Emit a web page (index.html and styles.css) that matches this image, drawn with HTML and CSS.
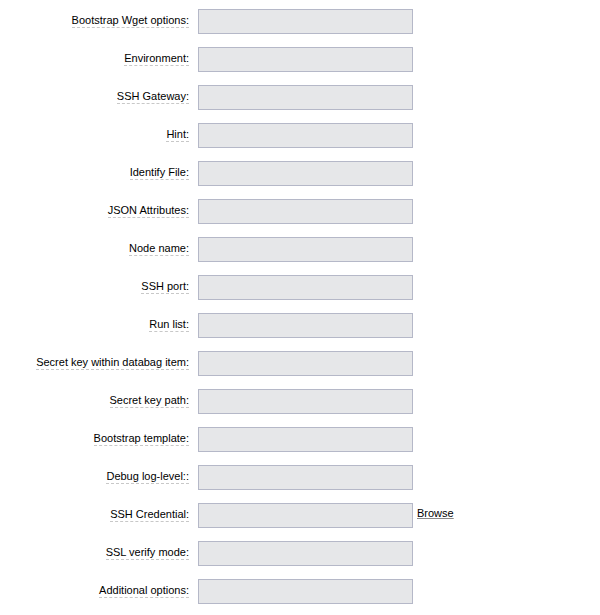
FILE: index.html
```html
<!DOCTYPE html>
<html>
<head>
<meta charset="utf-8">
<link rel="stylesheet" href="styles.css">
</head>
<body>
<div class="form">
  <div class="row"><div class="label"><span>Bootstrap Wget options:</span></div><div class="field"></div></div>
  <div class="row"><div class="label"><span>Environment:</span></div><div class="field"></div></div>
  <div class="row"><div class="label"><span>SSH Gateway:</span></div><div class="field"></div></div>
  <div class="row"><div class="label"><span>Hint:</span></div><div class="field"></div></div>
  <div class="row"><div class="label"><span>Identify File:</span></div><div class="field"></div></div>
  <div class="row"><div class="label"><span>JSON Attributes:</span></div><div class="field"></div></div>
  <div class="row"><div class="label"><span>Node name:</span></div><div class="field"></div></div>
  <div class="row"><div class="label"><span>SSH port:</span></div><div class="field"></div></div>
  <div class="row"><div class="label"><span>Run list:</span></div><div class="field"></div></div>
  <div class="row"><div class="label"><span>Secret key within databag item:</span></div><div class="field"></div></div>
  <div class="row"><div class="label"><span>Secret key path:</span></div><div class="field"></div></div>
  <div class="row"><div class="label"><span>Bootstrap template:</span></div><div class="field"></div></div>
  <div class="row"><div class="label"><span>Debug log-level::</span></div><div class="field"></div></div>
  <div class="row"><div class="label"><span>SSH Credential:</span></div><div class="field"></div><a class="browse" href="#">Browse</a></div>
  <div class="row"><div class="label"><span>SSL verify mode:</span></div><div class="field"></div></div>
  <div class="row"><div class="label"><span>Additional options:</span></div><div class="field"></div></div>
</div>
</body>
</html>
```
FILE: styles.css
```css
html, body {
  margin: 0;
  padding: 0;
  background: #ffffff;
}
.form {
  display: flex;
  flex-direction: column;
  gap: 13px;
  padding-top: 9px;
  font-family: "Liberation Sans", Arial, sans-serif;
  font-size: 11px;
  color: #000;
}
.row {
  display: flex;
  align-items: center;
  height: 25px;
}
.label {
  width: 189px;
  text-align: right;
  margin-right: 9px;
  margin-bottom: 1px;
}
.label span {
  display: inline-block;
  line-height: 13px;
  border-bottom: 1px dashed #c8c8c8;
}
.field {
  box-sizing: border-box;
  width: 215px;
  height: 25px;
  background: #e6e7e9;
  border: 1px solid #b5b8c8;
}
.browse {
  margin-left: 4px;
  margin-bottom: 4px;
  color: #000;
  line-height: 13px;
  text-decoration: underline;
  text-decoration-color: #888;
}
```
